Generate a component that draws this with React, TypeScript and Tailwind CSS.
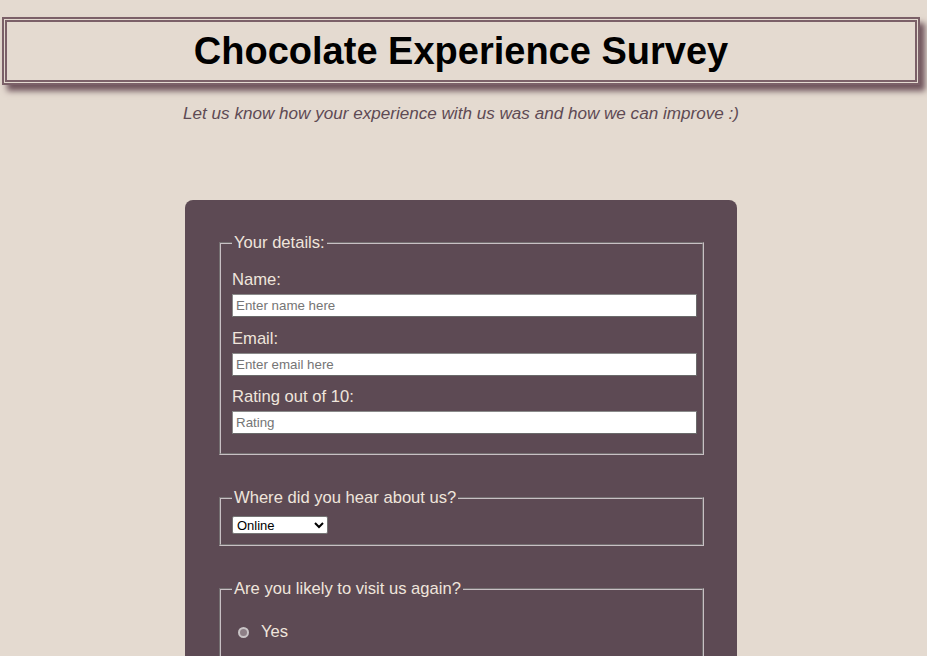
import React from "react";

export default function App() {
  const labelCls = "block text-[16.6px] leading-[20px] text-[#efe5dc]";
  const inputCls =
    "block w-[465px] max-w-none h-[23px] bg-white border border-t-[#8a8a8a] border-l-[#8a8a8a] border-r-[#6a6a6a] border-b-[#6a6a6a] px-[3px] text-[13.33px] text-black placeholder:text-[#757575] outline-none";
  const fsCls =
    "w-[485px] min-w-0 border-2 [border-style:groove] border-[#c8c0c4] px-[11px] mx-0";
  const legendCls = "px-[2px] text-[16.6px] leading-[20px] text-[#efe5dc]";
  return (
    <div
      className="min-h-screen bg-[#e4dad0] pt-[17px] pb-10"
      style={{ fontFamily: '"Liberation Sans", Arial, sans-serif' }}
    >
      <header className="ml-[2px] w-[918px] h-[68px] border-[5px] border-double border-[#7b6068] shadow-[5px_6px_6px_#6f545c] flex items-center justify-center">
        <h1 className="text-[38px] leading-[46px] font-bold text-black">
          Chocolate Experience Survey
        </h1>
      </header>
      <p className="mt-[19px] w-[922px] text-center italic text-[17.1px] leading-[20px] text-[#5e4a54]">
        Let us know how your experience with us was and how we can improve :)
      </p>
      <form className="mt-[76px] ml-[185px] w-[552px] rounded-[8px] bg-[#5d4a54] pt-[33px] pb-[40px] pl-[34px] pr-[33px]">
        <fieldset className={`${fsCls} pb-[19px]`}>
          <legend className={legendCls}>Your details:</legend>
          <label className={`${labelCls} mt-[17px]`}>Name:</label>
          <input className={`${inputCls} mt-[4px]`} placeholder="Enter name here" />
          <label className={`${labelCls} mt-[12px]`}>Email:</label>
          <input className={`${inputCls} mt-[4px]`} placeholder="Enter email here" />
          <label className={`${labelCls} mt-[11px]`}>Rating out of 10:</label>
          <input className={`${inputCls} mt-[4px]`} placeholder="Rating" />
        </fieldset>

        <fieldset className={`${fsCls} mt-[33px] pb-[10px]`}>
          <legend className={legendCls}>Where did you hear about us?</legend>
          <select
            defaultValue="Online"
            className="mt-[8px] block w-[96px] h-[18px] bg-white border border-[#767676] rounded-[2px] text-[13px] text-black"
          >
            <option>Online</option>
            <option>Friend</option>
            <option>Advert</option>
          </select>
        </fieldset>

        <fieldset className={`${fsCls} mt-[33px] pb-[16px]`}>
          <legend className={legendCls}>Are you likely to visit us again?</legend>
          {["Yes", "No", "Maybe"].map((o, i) => (
            <div
              key={o}
              className={`flex items-center h-[20px] ${i === 0 ? "mt-[23px]" : "mt-[14px]"}`}
            >
              <span className="ml-[6px] w-[11px] h-[11px] rounded-full border-[2px] border-[#c9c4c6] bg-[#8d7f86]" />
              <span className="ml-[12px] text-[16.6px] leading-[20px] text-[#efe5dc]">{o}</span>
            </div>
          ))}
        </fieldset>
      </form>
    </div>
  );
}
